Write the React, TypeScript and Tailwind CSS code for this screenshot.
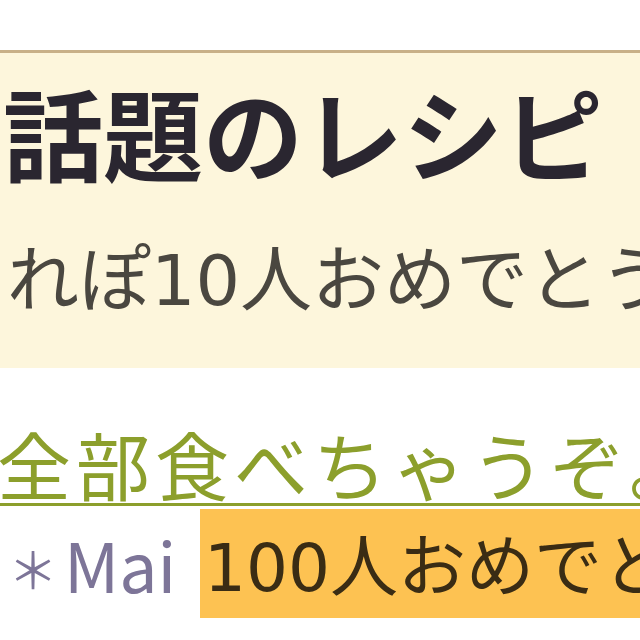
export default function App() {
  const font = { fontFamily: '"Noto Sans CJK JP", "Noto Sans", sans-serif' };

  return (
    <div
      className="w-[640px] h-[640px] overflow-hidden bg-white pt-[50px]"
      style={font}
    >
      {/* Topic recipes box */}
      <section className="border-t-[3px] border-[#c8b088] bg-[#fdf6dc] h-[318px] pt-[28px] pl-[3px] whitespace-nowrap overflow-hidden">
        <h2 className="text-[100px] leading-none font-bold text-[#2a2630]">
          話題のレシピ
        </h2>
        <p className="mt-[57px] text-[72px] leading-none text-[#4a4740] pl-[4px]">
          れぽ<span className="font-['DejaVu_Sans'] text-[70px]">10</span>人おめでとう
        </p>
      </section>

      {/* Recipe item */}
      <div className="pt-[58px] whitespace-nowrap overflow-hidden">
        <a
          href="#"
          className="block text-[74px] leading-none tracking-[5px] text-[#8c9f2c] border-b-[3px] border-[#8c9f2c] pb-[3px] -ml-[3px]"
        >
          全部食べちゃうぞ。
        </a>
        <div className="mt-[3px] flex items-center text-[68px] leading-none">
          <span className="shrink-0 w-[200px] pl-[8px] text-[#7d7598]">
            <span className="text-[50px] align-[4px]">＊</span>
            <span className="ml-[6px]">Mai</span>
          </span>
          <span className="shrink-0 bg-[#fdc252] text-[#3a2c14] pl-[4px] pt-[19px] pb-[16px]">
            <span className="font-['DejaVu_Sans'] text-[66px]">100</span>人おめでとう
          </span>
        </div>
      </div>
    </div>
  );
}
